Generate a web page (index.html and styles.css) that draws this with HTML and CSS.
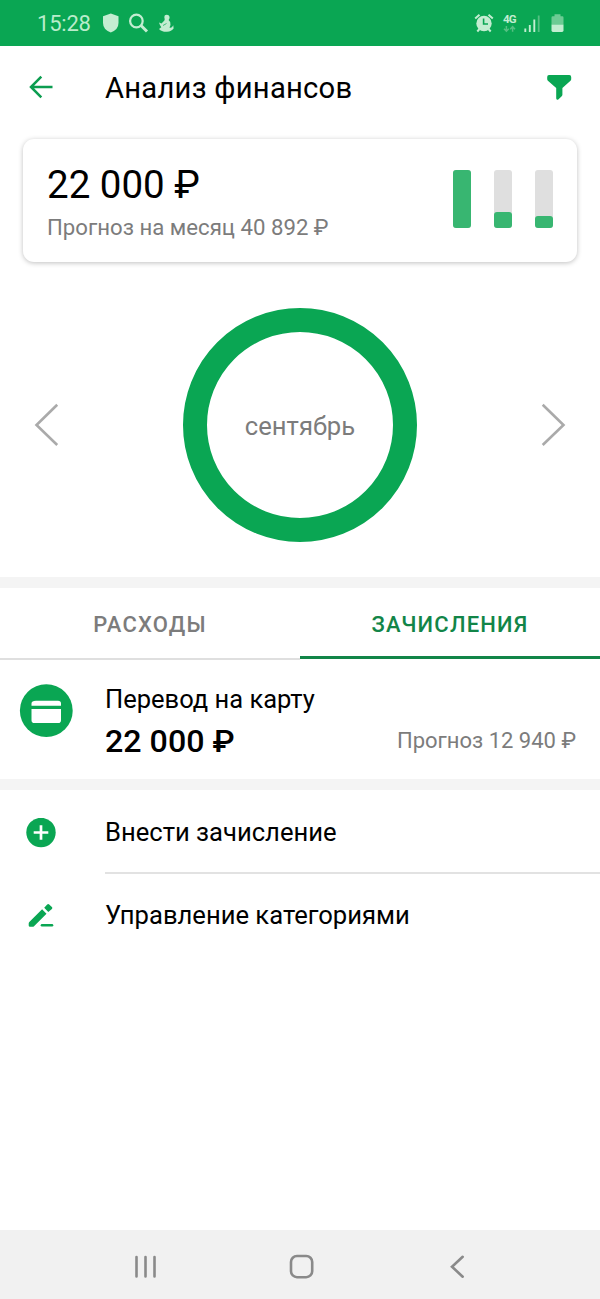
FILE: index.html
```html
<!DOCTYPE html>
<html lang="ru">
<head>
<meta charset="utf-8">
<title>Анализ финансов</title>
<link rel="stylesheet" href="styles.css">
</head>
<body>
<div class="screen">
  <div class="status">
    <span class="clock">15:28</span>
    <svg class="status-left" width="74" height="22" viewBox="102 12 74 22">
      <path class="pale" d="M110.800 13.500 L118.500 16.300 V23 Q118.500 29.500 110.800 32.500 Q103 29.500 103 23 V16.300 Z"/>
      <circle class="pale-line" cx="136.400" cy="21" r="6.300" stroke-width="2.200"/>
      <path class="pale-line" d="M141 25.500 L147 31.500" stroke-width="3"/>
      <path class="pale" d="M164.300 17 Q164.300 14.700 166.600 14.700 Q169.600 14.700 169.600 17.600 Q169.600 19 168.600 20 Q171 21.700 170.500 25 L169.500 27.500 Q171.500 28.500 173.300 25.200 L173.600 28.500 Q171.500 31.600 167 31.800 Q161.500 32 159 29 L161.300 27.300 Q159.500 24.500 159 22.500 L161.500 23.400 L164.400 20.500 Q165 19 164.500 18.200 Z"/>
      <path d="M163 25.500 L166.500 23.500" stroke="#0aa653" stroke-width="0.700"/>
    </svg>
    <svg class="status-right" width="94" height="24" viewBox="472 11 94 24">
      <circle class="pale" cx="484" cy="23.500" r="7.700"/>
      <path class="pale-line" d="M475.200 18.500 L479.500 14.700 M492.800 18.500 L488.500 14.700" stroke-width="2"/>
      <path class="pale-line" d="M479.500 29 L477.300 31.500 M488.500 29 L490.700 31.500" stroke-width="2"/>
      <path d="M483.600 18.500 V24 H488" fill="none" stroke="#0aa653" stroke-width="1.600"/>
      <text class="network" x="503" y="23" textLength="13.500">4G</text>
      <path class="dim-line" d="M506.400 26 V31 M504 28.700 L506.400 31.200 L508.800 28.700 M512.600 31.800 V26.800 M510.200 29.200 L512.600 26.700 L515 29.200" stroke-width="1.500"/>
      <path class="pale-line" d="M525.300 28.500 V32 M529.800 25 V32 M534.300 19.500 V32" stroke-width="1.900"/>
      <path class="dim-line" d="M538.700 15.500 V32" stroke-width="1.800"/>
      <path class="dim" d="M551.500 17.500 Q551.500 16.300 552.700 16.300 H554.500 V14.300 H560.500 V16.300 H562.300 Q563.500 16.300 563.500 17.500 V25 H551.500 Z"/>
      <path class="pale" d="M551.500 24.700 H563.500 V30.600 Q563.500 32 562.100 32 H552.900 Q551.500 32 551.500 30.600 Z"/>
    </svg>
  </div>

  <header class="appbar">
    <svg width="26" height="26" viewBox="28 74 26 26"><path d="M52.500 87 H31 M41.300 76.700 L31 87 L41.300 97.300" fill="none" stroke="#0c9d50" stroke-width="2.500"/></svg>
    <h1 class="title">Анализ финансов</h1>
    <svg width="26" height="28" viewBox="546 73 26 28"><path d="M549 75 H569.300 Q571.200 75 571.200 77 V79.200 Q571.200 80 570.500 80.700 L562.400 88 V94.800 Q562.400 95.700 561.700 96.300 L558.300 99.400 Q556.300 100.500 556.200 98.300 V88 L547.900 80.700 Q547.200 80 547.200 79 V77 Q547.200 75 549 75 Z" fill="#0aa653"/></svg>
  </header>

  <section class="summary">
    <div>
      <div class="total">22 000 ₽</div>
      <div class="forecast">Прогноз на месяц 40 892 ₽</div>
    </div>
    <div class="bars">
      <div class="bar"><div class="fill" style="height:58px"></div></div>
      <div class="bar"><div class="fill" style="height:16px"></div></div>
      <div class="bar"><div class="fill" style="height:12px"></div></div>
    </div>
  </section>

  <section class="chart">
    <svg width="26" height="44" viewBox="34 403 26 44"><path class="chevron" d="M57.200 404.700 L36.500 425 L57.200 445"/></svg>
    <div class="ring"><span class="month">сентябрь</span></div>
    <svg width="26" height="44" viewBox="540 403 26 44"><path class="chevron" d="M542.700 404.700 L563.500 425 L542.700 445"/></svg>
  </section>
  <div class="band"></div>

  <nav class="tabs">
    <div class="tab"><span class="tab-out">РАСХОДЫ</span></div>
    <div class="tab active"><span class="tab-in">ЗАЧИСЛЕНИЯ</span></div>
  </nav>

  <section class="operation">
    <svg class="card-icon" width="54" height="54" viewBox="0 0 54 54"><circle cx="27.300" cy="26.700" r="26.400" fill="#0aa653"/><path d="M34 16.700 H17 Q12.500 16.700 12.500 19.500 V21.700 H42 V19.500 Q42 16.700 39 16.700 Z M12.500 25 H42 V36.200 Q42 39 39.200 39 H15.300 Q12.500 39 12.500 36.200 Z" fill="#fff"/></svg>
    <div class="details">
      <div class="name">Перевод на карту</div>
      <div class="amounts"><span class="amount">22 000 ₽</span><span class="plan">Прогноз 12 940 ₽</span></div>
    </div>
  </section>
  <div class="band"></div>

  <section class="actions">
    <div class="action">
      <svg width="30" height="30" viewBox="0 1 30 30"><circle cx="15" cy="15.500" r="14.700" fill="#0aa653"/><path d="M15 8.200 V22.800 M7.700 15.500 H22.300" stroke="#fff" stroke-width="2.700"/></svg>
      <div class="label first"><span class="add-label">Внести зачисление</span></div>
    </div>
    <div class="action">
      <svg width="30" height="30" viewBox="26 900 30 30"><path d="M42.100 908.300 L46.500 912.700 L34 925.200 Q33.500 925.700 32.700 925.700 H30 Q28.700 925.700 28.700 924.400 V922.600 Q28.700 921.700 29.300 921.100 Z M44.200 906.800 L47.200 903.500 Q48.200 902.400 49.200 903.400 L51.900 906.100 Q52.900 907.100 51.900 908.100 L48.300 911 Z" fill="#0aa653"/><path d="M42 924.300 H52" stroke="#0aa653" stroke-width="2.600" stroke-linecap="round"/></svg>
      <div class="label"><span class="manage-label">Управление категориями</span></div>
    </div>
  </section>

  <footer class="system">
    <svg width="24" height="26" viewBox="134 1254 24 26"><path class="sys" d="M136.500 1257 V1276.500 M145.500 1257 V1276.500 M154.500 1257 V1276.500"/></svg>
    <svg width="26" height="26" viewBox="289 1254 26 26"><rect class="sys" x="291" y="1256" width="21.200" height="21.200" rx="6"/></svg>
    <svg width="18" height="26" viewBox="450 1254 18 26"><path class="sys" d="M463.700 1256.800 L453 1266.700 L463.700 1276.700"/></svg>
  </footer>
</div>
</body>
</html>
```
FILE: styles.css
```css
body {
  margin: 0;
  background: #fff;
  font-family: Roboto, "Noto Sans", sans-serif;
  color: #000;
}
.screen {
  display: flex;
  flex-direction: column;
  width: 600px;
  height: 1299px;
  overflow: hidden;
  white-space: nowrap;
}
.screen svg { display: block; flex: none; }

.status {
  flex: none;
  box-sizing: border-box;
  display: flex;
  align-items: center;
  height: 46px;
  padding: 0 34px 0 37px;
  background: #0aa653;
}
.clock {
  width: 65px;
  padding-top: 2px;
  color: #b9eccb;
  font-size: 22px;
  line-height: 26px;
  letter-spacing: -0.2px;
}
.status-right { margin-left: auto; }
.pale { fill: #c3edd1; }
.pale-line { fill: none; stroke: #c3edd1; }
.dim { fill: #6ccb94; }
.dim-line { fill: none; stroke: #55c083; }
.network { fill: #c3edd1; font-size: 11.5px; font-weight: 700; }

.appbar {
  flex: none;
  box-sizing: border-box;
  display: flex;
  align-items: center;
  height: 93px;
  padding: 0 28px 11px;
}
.title {
  flex: 1;
  margin: 0 0 0 51px;
  padding-top: 2px;
  font-size: 29.2px;
  font-weight: 400;
  line-height: 34px;
  letter-spacing: 0.25px;
}

.summary {
  flex: none;
  box-sizing: border-box;
  display: flex;
  justify-content: space-between;
  height: 123px;
  margin: 0 23px;
  padding: 22px 24px 0;
  border-radius: 11px;
  box-shadow: 0 1px 5px rgba(0, 0, 0, .25);
}
.total { padding-top: 1px; font-size: 38.500px; line-height: 46px; }
.forecast { margin-top: 6px; color: #7c7c7c; font-size: 22.200px; line-height: 27px; }
.bars { display: flex; gap: 23px; padding-top: 9px; }
.bar {
  display: flex;
  align-items: flex-end;
  width: 18px;
  height: 58px;
  border-radius: 3px;
  background: #dfdfdf;
}
.fill { width: 18px; border-radius: 3px; background: #38b671; }

.chart {
  flex: none;
  box-sizing: border-box;
  display: flex;
  align-items: center;
  justify-content: space-between;
  height: 315px;
  padding: 11px 34px 0;
}
.chevron { fill: none; stroke: #aaa; stroke-width: 2.6; }
.ring {
  box-sizing: border-box;
  display: flex;
  align-items: center;
  justify-content: center;
  width: 234px;
  height: 234px;
  border: 24px solid #0aa653;
  border-radius: 50%;
}
.month { padding-top: 2px; color: #7c7c7c; font-size: 25.600px; line-height: 30px; }
.band { flex: none; height: 11px; background: #f4f4f4; }

.tabs { flex: none; display: flex; height: 72px; }
.tab {
  flex: 1;
  box-sizing: border-box;
  display: flex;
  justify-content: center;
  height: 72px;
  padding-top: 23px;
  border-bottom: 2px solid #dfdfdf;
  color: #7c7c7c;
  font-size: 22px;
  font-weight: 500;
  line-height: 28px;
}
.tab.active { height: 71px; border-bottom: 3px solid #128548; color: #128548; }
.tab-out, .tab-in { letter-spacing: 1.2px; }

.operation {
  flex: none;
  box-sizing: border-box;
  display: flex;
  height: 119px;
  padding: 24px 24px 0 19px;
}
.details { flex: 1; margin-left: 32px; }
.name { font-size: 25.500px; line-height: 31px; }
.amounts { display: flex; justify-content: space-between; align-items: flex-start; margin-top: 5px; }
.amount { font-size: 32.200px; font-weight: 500; line-height: 42px; }
.plan { padding-top: 7px; color: #7c7c7c; font-size: 22px; line-height: 27px; }

.actions { flex: 1; padding-top: 1px; }
.action { display: flex; align-items: center; height: 83px; padding-left: 26px; }
.label {
  flex: 1;
  box-sizing: border-box;
  height: 83px;
  margin-left: 49px;
  padding-top: 26px;
  font-size: 25.600px;
  line-height: 31px;
}
.label.first { border-bottom: 2px solid #e2e2e2; }

.system {
  flex: none;
  box-sizing: border-box;
  display: flex;
  align-items: center;
  height: 69px;
  padding: 4px 0 0 134px;
  gap: 131px;
  background: #f1f1f1;
}
.system svg:last-child { margin-left: 3px; }
.sys { fill: none; stroke: #8a8a8a; stroke-width: 2.6; stroke-linecap: round; }
```
